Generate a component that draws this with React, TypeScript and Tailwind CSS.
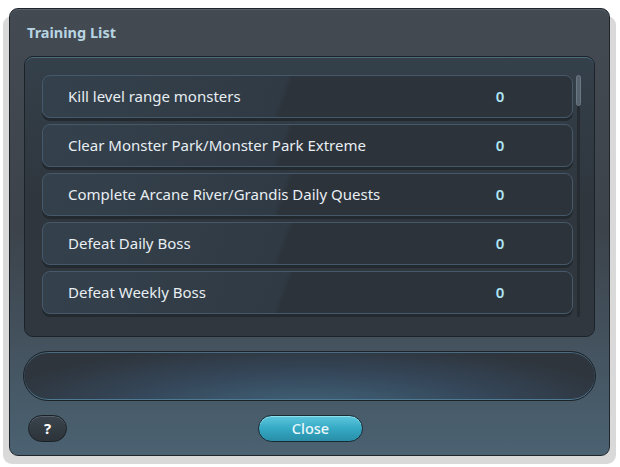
import type { JSX } from 'react';

const tasks = [
  'Kill level range monsters',
  'Clear Monster Park/Monster Park Extreme',
  'Complete Arcane River/Grandis Daily Quests',
  'Defeat Daily Boss',
  'Defeat Weekly Boss',
];

export default function App(): JSX.Element {
  return (
    <div className="w-[620px] h-[467px] bg-white pt-[8px] pl-[9px] font-['Noto_Sans',sans-serif]">
      {/* Window */}
      <div className="w-[601px] h-[448px] rounded-[9px] border border-[#1f252b] bg-gradient-to-b from-[#434a52] via-[#3c434b] to-[#4b6272] shadow-[-6px_8px_0_#d9d9d9,6px_8px_0_#d9d9d9] flex flex-col">
        {/* Title */}
        <div className="h-[47px] flex items-center pl-[17px] rounded-t-[9px] border-t border-[#5a636c]">
          <h1 className="text-[14.5px] font-bold text-[#b8d4e2]">Training List</h1>
        </div>

        {/* List panel */}
        <div className="mx-[14px] h-[281px] rounded-[9px] border border-[#1b2228] bg-gradient-to-b from-[#34404a] via-[#2f363e] to-[#30373f] shadow-[inset_0_1px_0_#4d6b80] flex pt-[18px] pl-[17px] pr-[12px] overflow-hidden">
          <div className="flex-1 flex flex-col gap-[6px]">
            {tasks.map((t) => (
              <div
                key={t}
                className="h-[43px] shrink-0 rounded-[8px] border border-[#46596a] bg-[linear-gradient(110deg,#34414c_0%,#303a44_45%,#2c333b_46%,#2c333b_100%)] shadow-[0_3px_0_#22292f] flex items-center pl-[25px]"
              >
                <span className="flex-1 text-[15px] text-[#e8eef2]">{t}</span>
                <span className="w-[40px] text-center text-[15px] font-semibold text-[#aee6f4]">0</span>
                <span className="w-[52px]" />
              </div>
            ))}
          </div>
          {/* Scrollbar */}
          <div className="w-[6px] ml-[3px] h-[242px] relative">
            <div className="absolute left-[1px] top-0 bottom-0 w-[3px] bg-[#262c32]" />
            <div className="absolute left-0 top-0 w-[5px] h-[31px] rounded-[3px] bg-[#56626d] border border-[#6b7884]" />
          </div>
        </div>

        {/* Message box */}
        <div className="mt-[14px] mx-[13px] h-[50px] rounded-[25px] border border-[#1b2329] bg-[radial-gradient(ellipse_at_50%_120%,#42657b_0%,#35475a_45%,#2e353d_80%)] shadow-[inset_0_1px_0_#4a6b80,inset_0_-1px_0_#4f7a93]" />

        {/* Buttons */}
        <div className="mt-[14px] h-[27px] flex items-center relative">
          <button className="ml-[18px] w-[39px] h-[27px] rounded-[14px] border border-[#1a2026] bg-gradient-to-b from-[#3b444d] to-[#2c3339] shadow-[inset_0_1px_0_#56616b] text-white font-bold text-[15px] flex items-center justify-center">
            ?
          </button>
          <button className="absolute left-[248px] w-[105px] h-[27px] rounded-[14px] border border-[#1a2a33] bg-gradient-to-b from-[#5cc7dd] via-[#35a9c4] to-[#2a8ea8] shadow-[inset_0_1px_0_#8fe0ee] text-[#eaf8fb] text-[14.5px] font-medium flex items-center justify-center">
            Close
          </button>
        </div>
      </div>
    </div>
  );
}
